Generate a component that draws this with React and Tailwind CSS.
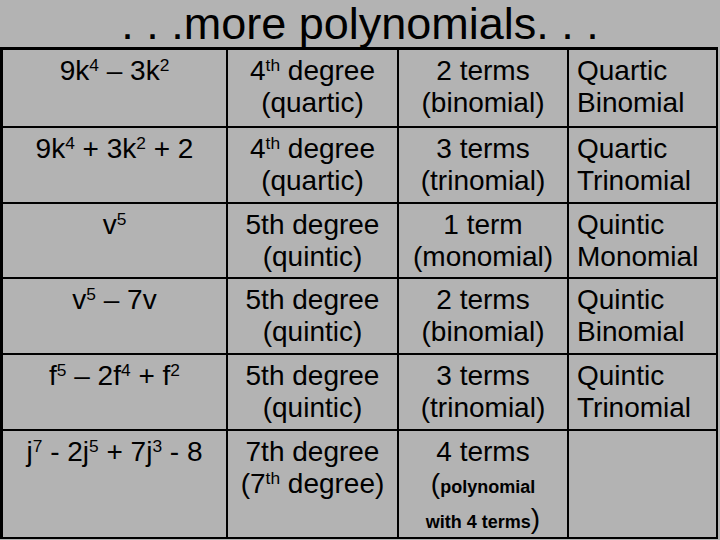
const rows = [
  {
    poly: <>9k<sup className="text-[0.62em]">4</sup> – 3k<sup className="text-[0.62em]">2</sup></>,
    degree: <>4<sup className="text-[0.62em]">th</sup> degree<br />(quartic)</>,
    terms: <>2 terms<br />(binomial)</>,
    name: <>Quartic<br />Binomial</>,
  },
  {
    poly: <>9k<sup className="text-[0.62em]">4</sup> + 3k<sup className="text-[0.62em]">2</sup> + 2</>,
    degree: <>4<sup className="text-[0.62em]">th</sup> degree<br />(quartic)</>,
    terms: <>3 terms<br />(trinomial)</>,
    name: <>Quartic<br />Trinomial</>,
  },
  {
    poly: <>v<sup className="text-[0.62em]">5</sup></>,
    degree: <>5th degree<br />(quintic)</>,
    terms: <>1 term<br />(monomial)</>,
    name: <>Quintic<br />Monomial</>,
  },
  {
    poly: <>v<sup className="text-[0.62em]">5</sup> – 7v</>,
    degree: <>5th degree<br />(quintic)</>,
    terms: <>2 terms<br />(binomial)</>,
    name: <>Quintic<br />Binomial</>,
  },
  {
    poly: <>f<sup className="text-[0.62em]">5</sup> – 2f<sup className="text-[0.62em]">4</sup> + f<sup className="text-[0.62em]">2</sup></>,
    degree: <>5th degree<br />(quintic)</>,
    terms: <>3 terms<br />(trinomial)</>,
    name: <>Quintic<br />Trinomial</>,
  },
  {
    poly: <>j<sup className="text-[0.62em]">7</sup> - 2j<sup className="text-[0.62em]">5</sup> + 7j<sup className="text-[0.62em]">3</sup> - 8</>,
    degree: <>7th degree<br />(7<sup className="text-[0.62em]">th</sup> degree)</>,
    terms: (
      <>
        4 terms<br />
        (<span className="text-[18px] font-bold">polynomial</span><br />
        <span className="text-[18px] font-bold">with 4 terms</span>)
      </>
    ),
    name: null,
  },
];

export default function App() {
  return (
    <div className="w-[720px] h-[540px] bg-[#b3b3b3] text-black font-['Liberation_Sans',Arial,sans-serif] overflow-hidden">
      <h1 className="h-[47px] text-center text-[45px] leading-[47px]">. . .more polynomials. . .</h1>
      <div className="w-[718px] bg-black pt-[3px] pl-[3px] pr-[2px] pb-[2px] grid grid-cols-[223px_169px_168px_147px] grid-rows-[76px_74px_73px_74px_74px_106px] gap-[2px] text-[28px] leading-[32px]">
        {rows.map((r, i) => (
          <div key={i} className="contents">
            <div className="bg-[#b3b3b3] text-center pt-[5px]">{r.poly}</div>
            <div className="bg-[#b3b3b3] text-center pt-[5px]">{r.degree}</div>
            <div className="bg-[#b3b3b3] text-center pt-[5px]">{r.terms}</div>
            <div className="bg-[#b3b3b3] text-left pl-[8px] pt-[5px]">{r.name}</div>
          </div>
        ))}
      </div>
    </div>
  );
}
